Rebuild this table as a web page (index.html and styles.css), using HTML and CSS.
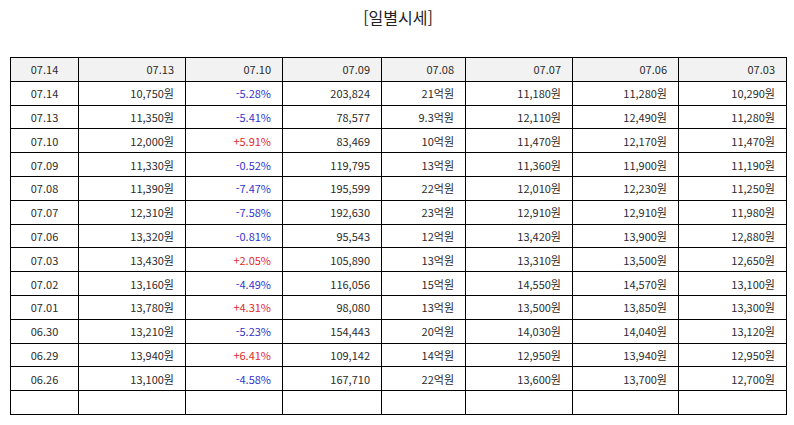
FILE: index.html
```html
<!DOCTYPE html>
<html lang="ko">
<head>
<meta charset="utf-8">
<link rel="stylesheet" href="styles.css">
</head>
<body>
<div class="page">
  <h2 class="title">[일별시세]</h2>
  <table class="grid">
    <colgroup>
      <col class="c1"><col class="c2"><col class="c3"><col class="c4"><col class="c5"><col class="c6"><col class="c7"><col class="c8">
    </colgroup>
    <thead>
      <tr><th>07.14</th><th>07.13</th><th>07.10</th><th>07.09</th><th>07.08</th><th>07.07</th><th>07.06</th><th>07.03</th></tr>
    </thead>
    <tbody>
      <tr><td>07.14</td><td>10,750원</td><td class="dn">-5.28%</td><td>203,824</td><td>21억원</td><td>11,180원</td><td>11,280원</td><td>10,290원</td></tr>
      <tr><td>07.13</td><td>11,350원</td><td class="dn">-5.41%</td><td>78,577</td><td>9.3억원</td><td>12,110원</td><td>12,490원</td><td>11,280원</td></tr>
      <tr><td>07.10</td><td>12,000원</td><td class="up">+5.91%</td><td>83,469</td><td>10억원</td><td>11,470원</td><td>12,170원</td><td>11,470원</td></tr>
      <tr><td>07.09</td><td>11,330원</td><td class="dn">-0.52%</td><td>119,795</td><td>13억원</td><td>11,360원</td><td>11,900원</td><td>11,190원</td></tr>
      <tr><td>07.08</td><td>11,390원</td><td class="dn">-7.47%</td><td>195,599</td><td>22억원</td><td>12,010원</td><td>12,230원</td><td>11,250원</td></tr>
      <tr><td>07.07</td><td>12,310원</td><td class="dn">-7.58%</td><td>192,630</td><td>23억원</td><td>12,910원</td><td>12,910원</td><td>11,980원</td></tr>
      <tr><td>07.06</td><td>13,320원</td><td class="dn">-0.81%</td><td>95,543</td><td>12억원</td><td>13,420원</td><td>13,900원</td><td>12,880원</td></tr>
      <tr><td>07.03</td><td>13,430원</td><td class="up">+2.05%</td><td>105,890</td><td>13억원</td><td>13,310원</td><td>13,500원</td><td>12,650원</td></tr>
      <tr><td>07.02</td><td>13,160원</td><td class="dn">-4.49%</td><td>116,056</td><td>15억원</td><td>14,550원</td><td>14,570원</td><td>13,100원</td></tr>
      <tr><td>07.01</td><td>13,780원</td><td class="up">+4.31%</td><td>98,080</td><td>13억원</td><td>13,500원</td><td>13,850원</td><td>13,300원</td></tr>
      <tr><td>06.30</td><td>13,210원</td><td class="dn">-5.23%</td><td>154,443</td><td>20억원</td><td>14,030원</td><td>14,040원</td><td>13,120원</td></tr>
      <tr><td>06.29</td><td>13,940원</td><td class="up">+6.41%</td><td>109,142</td><td>14억원</td><td>12,950원</td><td>13,940원</td><td>12,950원</td></tr>
      <tr><td>06.26</td><td>13,100원</td><td class="dn">-4.58%</td><td>167,710</td><td>22억원</td><td>13,600원</td><td>13,700원</td><td>12,700원</td></tr>
      <tr class="empty"><td></td><td></td><td></td><td></td><td></td><td></td><td></td><td></td></tr>
    </tbody>
  </table>
</div>
</body>
</html>
```
FILE: styles.css
```css
html, body {
  margin: 0;
  padding: 0;
  background: #ffffff;
}
body {
  font-family: "Noto Sans CJK KR", "Noto Sans", sans-serif;
  color: #2b2b2b;
}
.page {
  padding: 0 8px 0 10px;
}
.title {
  margin: 0;
  padding-top: 6px;
  height: 57px;
  box-sizing: border-box;
  text-align: center;
  font-size: 16px;
  font-weight: normal;
  line-height: 22px;
  color: #222222;
}
.grid {
  width: 776px;
  border-collapse: collapse;
  table-layout: fixed;
  font-size: 11px;
}
.c1 { width: 68px; }
.c2 { width: 107px; }
.c3 { width: 97px; }
.c4 { width: 99px; }
.c5 { width: 84px; }
.c6 { width: 107px; }
.c7 { width: 106px; }
.c8 { width: 108px; }
.grid th,
.grid td {
  border: 1px solid #000000;
  height: 22.8px;
  padding: 0 11px 0 4px;
  text-align: right;
  font-weight: normal;
  line-height: 14px;
  white-space: nowrap;
}
.grid th {
  background: #f2f2f2;
}
.grid th:first-child,
.grid td:first-child {
  text-align: center;
  padding: 0;
}
.grid .dn { color: #3333cc; }
.grid .up { color: #e02a2a; }
```
